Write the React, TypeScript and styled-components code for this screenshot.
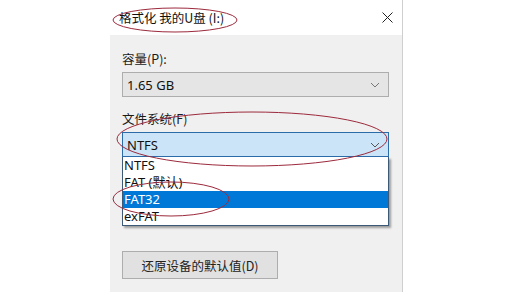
import React from "react";
import styled, { createGlobalStyle } from "styled-components";

const Global = createGlobalStyle`
  html, body { margin: 0; padding: 0; background: #ffffff; }
  body { font-family: "Noto Sans", "Noto Sans CJK SC", sans-serif; }
  #root { width: 505px; height: 292px; position: relative; overflow: hidden; }
`;

const Page = styled.div`
  width: 505px;
  height: 292px;
  position: relative;
  background: #ffffff;
  display: flex;
`;

const Dialog = styled.div`
  margin-left: 110px;
  width: 292px;
  height: 292px;
  border-right: 1px solid #cfcfcf;
  display: flex;
  flex-direction: column;
`;

const TitleBar = styled.div`
  height: 35px;
  background: #ffffff;
  display: flex;
  align-items: center;
  justify-content: space-between;
  padding: 0 9px 0 9px;
  box-sizing: border-box;
  font-family: "Noto Sans CJK SC", sans-serif;
  font-size: 12.5px;
  color: #111;
`;

const Body = styled.div`
  flex: 1;
  background: #f0f0f0;
  padding: 15px 13px 0 12px;
  display: flex;
  flex-direction: column;
  font-family: "Noto Sans CJK SC", sans-serif;
  font-size: 12.5px;
  color: #1a1a1a;
`;

const Label = styled.div<{ $top?: number }>`
  height: 18px;
  line-height: 18px;
  margin-top: ${(p) => p.$top ?? 0}px;
  margin-bottom: 4px;
`;

const Field = styled.div`
  position: relative;
`;

const Select = styled.div<{ $focused?: boolean }>`
  height: 25px;
  box-sizing: border-box;
  border: 1px solid ${(p) => (p.$focused ? "#2b6ca8" : "#adadad")};
  background: ${(p) => (p.$focused ? "#cce4f7" : "#e5e5e5")};
  display: flex;
  align-items: center;
  justify-content: space-between;
  padding: 0 8px 0 4px;
  font-family: "Noto Sans", sans-serif;
  font-size: 13px;
  color: #111;
`;

const List = styled.div`
  position: absolute;
  left: 0;
  right: 0;
  top: 25px;
  background: #ffffff;
  border: 1px solid #3c5a78;
  border-top: none;
  box-shadow: 2px 2px 2px rgba(0, 0, 0, 0.35);
  display: flex;
  flex-direction: column;
`;

const Item = styled.div<{ $selected?: boolean }>`
  height: 17px;
  line-height: 17px;
  padding-left: 1px;
  background: ${(p) => (p.$selected ? "#0078d7" : "transparent")};
  color: ${(p) => (p.$selected ? "#ffffff" : "#111")};
  font-family: "Noto Sans", "Noto Sans CJK SC", sans-serif;
  font-size: 13px;
`;

const Button = styled.div`
  margin-top: 94px;
  width: 156px;
  height: 28px;
  box-sizing: border-box;
  border: 1px solid #adadad;
  background: #e1e1e1;
  display: flex;
  align-items: center;
  justify-content: center;
  font-size: 12.5px;
  color: #222;
`;

const Overlay = styled.svg`
  position: absolute;
  left: 0;
  top: 0;
  pointer-events: none;
`;

const Chevron = ({ color }: { color: string }) => (
  <svg width="10" height="6" viewBox="0 0 10 6">
    <path d="M1 1 L5 5 L9 1" fill="none" stroke={color} strokeWidth="1" />
  </svg>
);

const CloseIcon = () => (
  <svg width="11" height="11" viewBox="0 0 11 11">
    <path d="M0.5 0.5 L10.5 10.5 M10.5 0.5 L0.5 10.5" stroke="#222" strokeWidth="1" />
  </svg>
);

export default function App() {
  return (
    <>
      <Global />
      <Page>
        <Dialog>
          <TitleBar>
            <span>格式化 我的U盘 (I:)</span>
            <CloseIcon />
          </TitleBar>
          <Body>
            <Label>容量(P):</Label>
            <Select>
              <span>1.65 GB</span>
              <Chevron color="#777" />
            </Select>
            <Label $top={13}>文件系统(F)</Label>
            <Field>
              <Select $focused>
                <span>NTFS</span>
                <Chevron color="#555" />
              </Select>
              <List>
                <Item>NTFS</Item>
                <Item>FAT (默认)</Item>
                <Item $selected>FAT32</Item>
                <Item>exFAT</Item>
              </List>
            </Field>
            <Button>还原设备的默认值(D)</Button>
          </Body>
        </Dialog>
        <Overlay width="505" height="292" viewBox="0 0 505 292">
          <g fill="none" stroke="#9c2a3c" strokeWidth="1">
            <ellipse cx="175" cy="20" rx="62" ry="12" />
            <ellipse cx="252" cy="139" rx="135" ry="27" />
            <ellipse cx="171" cy="199" rx="58" ry="17" />
          </g>
        </Overlay>
      </Page>
    </>
  );
}
